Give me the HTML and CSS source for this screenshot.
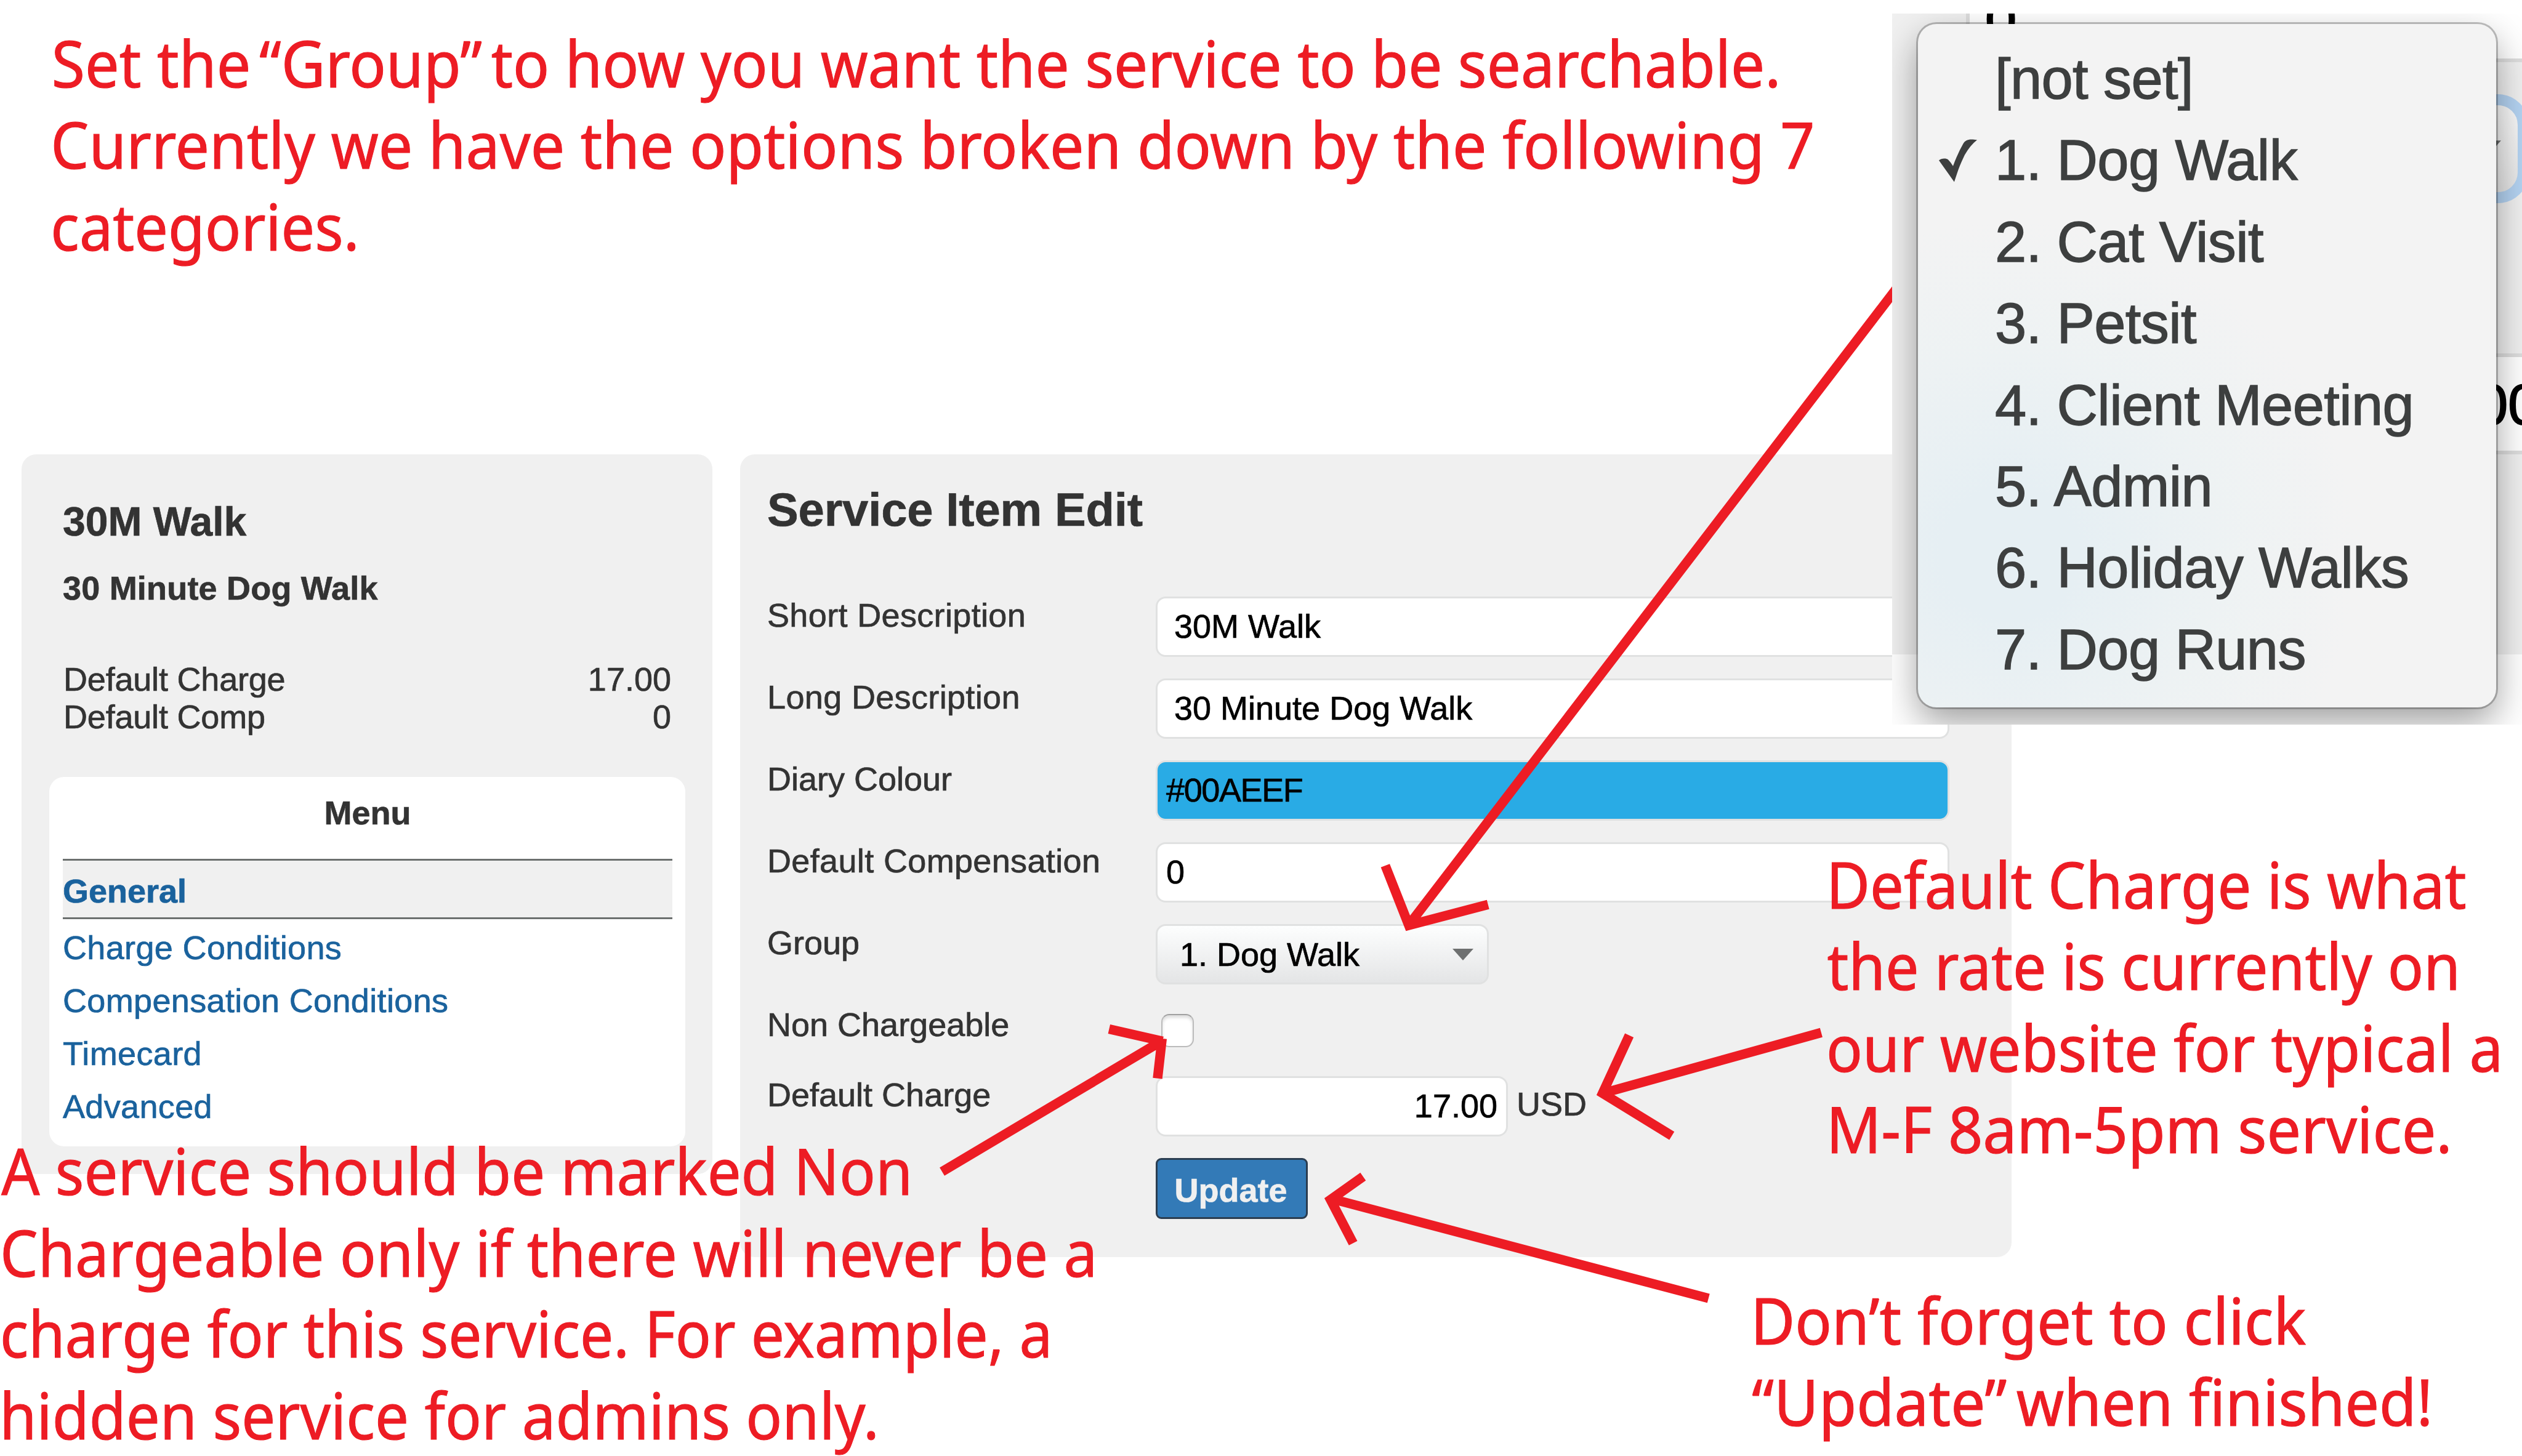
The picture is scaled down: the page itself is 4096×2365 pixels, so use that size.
FILE: index.html
```html
<!DOCTYPE html>
<html lang="en">
<head>
<meta charset="utf-8">
<title>Service Item Edit</title>
<link rel="stylesheet" href="styles.css">
</head>
<body>
<main class="page">
  <aside class="panel sidebar">
    <h1 class="item-name">30M Walk</h1>
    <h2 class="item-desc">30 Minute Dog Walk</h2>
    <dl class="facts">
      <div class="fact"><dt>Default Charge</dt><dd>17.00</dd></div>
      <div class="fact"><dt>Default Comp</dt><dd>0</dd></div>
    </dl>
    <nav class="menu">
      <h3 class="menu-title">Menu</h3>
      <a class="menu-link current">General</a>
      <a class="menu-link">Charge Conditions</a>
      <a class="menu-link">Compensation Conditions</a>
      <a class="menu-link">Timecard</a>
      <a class="menu-link">Advanced</a>
    </nav>
  </aside>

  <section class="panel editor">
    <h1 class="editor-title">Service Item Edit</h1>
    <div class="row"><span class="label loose">Short Description</span><div class="field wide inset">30M Walk</div></div>
    <div class="row"><span class="label loose">Long Description</span><div class="field wide inset">30 Minute Dog Walk</div></div>
    <div class="row"><span class="label">Diary Colour</span><div class="field wide colour">#00AEEF</div></div>
    <div class="row"><span class="label loose">Default Compensation</span><div class="field wide">0</div></div>
    <div class="row"><span class="label">Group</span>
      <div class="field select"><span>1. Dog Walk</span><svg class="caret" viewBox="0 0 34 19"><path d="M0 0H34L17 19Z"/></svg></div>
    </div>
    <div class="row short"><span class="label">Non Chargeable</span><div class="checkbox"></div></div>
    <div class="row"><span class="label">Default Charge</span><div class="field amount">17.00</div><span class="unit">USD</span></div>
    <div class="row"><span class="label"></span><div class="button">Update</div></div>
  </section>
</main>

<svg class="notes" viewBox="0 0 5571 3216">
  <g class="arrows">
    <path d="M4240 571L3113 2042M3060 1912L3112 2044L3287 1998"/>
    <path d="M2081 2588L2562 2302M2450 2273L2568 2300M2567 2294L2557 2382"/>
    <path d="M4023 2281L3540 2415M3599 2287L3540 2415L3693 2509"/>
    <path d="M3774 2868L2941 2648M3011 2599L2939 2650L2989 2746"/>
  </g>
  <g class="words">
    <text x="114" y="193" textLength="440" lengthAdjust="spacingAndGlyphs">Set the</text>
    <text x="573" y="193" textLength="492" lengthAdjust="spacingAndGlyphs">“Group”</text>
    <text x="1085" y="193" textLength="2849" lengthAdjust="spacingAndGlyphs">to how you want the service to be searchable.</text>
    <text x="112" y="373" textLength="3897" lengthAdjust="spacingAndGlyphs">Currently we have the options broken down by the following 7</text>
    <text x="112" y="553" textLength="682" lengthAdjust="spacingAndGlyphs">categories.</text>

    <text x="3" y="2640" textLength="2013" lengthAdjust="spacingAndGlyphs">A service should be marked Non</text>
    <text x="0" y="2820" textLength="2424" lengthAdjust="spacingAndGlyphs">Chargeable only if there will never be a</text>
    <text x="0" y="2999" textLength="2325" lengthAdjust="spacingAndGlyphs">charge for this service. For example, a</text>
    <text x="-1" y="3179" textLength="1943" lengthAdjust="spacingAndGlyphs">hidden service for admins only.</text>

    <text x="4034" y="2007" textLength="1414" lengthAdjust="spacingAndGlyphs">Default Charge is what</text>
    <text x="4036" y="2187" textLength="1399" lengthAdjust="spacingAndGlyphs">the rate is currently on</text>
    <text x="4034" y="2367" textLength="1495" lengthAdjust="spacingAndGlyphs">our website for typical a</text>
    <text x="4034" y="2547" textLength="1383" lengthAdjust="spacingAndGlyphs">M-F 8am-5pm service.</text>

    <text x="3867" y="2970" textLength="1227" lengthAdjust="spacingAndGlyphs">Don’t forget to click</text>
    <text x="3870" y="3150" textLength="563" lengthAdjust="spacingAndGlyphs">“Update”</text>
    <text x="4454" y="3150" textLength="920" lengthAdjust="spacingAndGlyphs">when finished!</text>
  </g>
</svg>

<div class="snapshot">
  <div class="backdrop">
    <div class="back-field back-top">0</div>
    <div class="back-select"></div>
    <svg class="back-caret" viewBox="0 0 34 19"><path d="M0 0H34L17 19Z"/></svg>
    <div class="back-field back-amount">00</div>
  </div>
  <ul class="popup">
    <li>[not set]</li>
    <li class="chosen"><svg class="tick" viewBox="335 855 260 295"><path d="M338 1005C352 990 385 987 400 1000Q418 1018 432 1042Q462 960 500 893C515 868 535 860 592 868Q545 905 510 968Q475 1040 460 1088L440 1148Z"/></svg>1. Dog Walk</li>
    <li>2. Cat Visit</li>
    <li>3. Petsit</li>
    <li>4. Client Meeting</li>
    <li>5. Admin</li>
    <li>6. Holiday Walks</li>
    <li>7. Dog Runs</li>
  </ul>
</div>
</body>
</html>
```
FILE: styles.css
```css
* { box-sizing: border-box; }

body {
  position: relative;
  width: 4096px;
  height: 2365px;
  margin: 0;
  overflow: hidden;
  background: #fff;
  color: #333;
  font: 54px/60px "Liberation Sans", Arial, sans-serif;
  -webkit-text-stroke: .7px;
}

h1, h2, h3, dl, dd, ul { margin: 0; padding: 0; }

.page {
  display: flex;
  align-items: flex-start;
  gap: 45px;
  padding: 738px 0 0 35px;
}

.panel {
  background: #f0f0f0;
  border-radius: 24px;
}

.sidebar {
  width: 1122px;
  height: 1169px;
  padding: 72px 44px 0 45px;
}

.item-name { padding-left: 22px; font-size: 66px; line-height: 74px; }
.item-desc { margin-top: 41px; padding-left: 22px; font-size: 54px; letter-spacing: .2px; }
.facts { margin-top: 88px; padding: 0 23px; line-height: 61px; }
.fact { display: flex; justify-content: space-between; }
.fact dt { letter-spacing: -.2px; }

.menu {
  display: flex;
  flex-direction: column;
  height: 600px;
  margin-top: 67px;
  padding: 28px 21px 0 22px;
  border-radius: 24px;
  background: #fff;
}

.menu-title { margin-bottom: 45px; font-size: 54px; text-align: center; }
.menu-link { color: #1a629d; letter-spacing: .35px; line-height: 86px; }
.menu-link.current {
  margin-bottom: 3px;
  padding: 19px 0 13px;
  border: solid #6c706f;
  border-width: 3px 0;
  background: #f0f0f0;
  font-weight: bold;
  letter-spacing: 0;
  line-height: 60px;
}

.editor {
  width: 2065px;
  height: 1304px;
  padding: 47px 0 0 44px;
}

.editor-title { height: 184px; font-size: 76px; letter-spacing: -.15px; line-height: 85px; }

.row { display: flex; align-items: flex-start; height: 133px; }
.row.short { height: 114px; }
.label { width: 631px; }
.label.loose { letter-spacing: .35px; }

.field {
  height: 98px;
  padding: 0 14px;
  border: 3px solid #e0e1e1;
  border-radius: 16px;
  background: #fff;
  color: #000;
  line-height: 91px;
}
.field.wide { width: 1289px; }
.field.inset { padding-left: 27px; }
.field.colour { background: #29abe5; letter-spacing: -1.4px; }
.field.amount { width: 572px; text-align: right; }

.field.select {
  display: flex;
  align-items: center;
  justify-content: space-between;
  width: 541px;
  padding: 0 22px 0 36px;
  background: linear-gradient(#fdfefe, #e4e5e6);
}
.caret { width: 34px; height: 19px; fill: #6e7070; }

.checkbox {
  width: 53px;
  height: 54px;
  margin: 13px 0 0 9px;
  border: 2px solid #bbb;
  border-top-color: #a0a0a0;
  border-radius: 13px;
  background: #fff;
  box-shadow: inset 0 4px 5px #ddd;
}

.unit { margin: 15px 0 0 14px; }

.button {
  width: 247px;
  height: 99px;
  padding-right: 3px;
  border: 3px solid #2b3d50;
  border-radius: 9px;
  background: #337ab7;
  color: #f0f0f0;
  font-weight: bold;
  line-height: 98px;
  text-align: center;
}

.notes {
  position: absolute;
  inset: 0;
  width: 4096px;
  height: 2365px;
}
.arrows { fill: none; stroke: #ed1c24; stroke-width: 21; stroke-miterlimit: 10; }
.words {
  fill: #ed1c24;
  stroke: #ed1c24;
  stroke-width: 1.5;
  font: 141px "Noto Sans", "Open Sans", sans-serif;
  -webkit-text-stroke: 0;
}

.snapshot {
  position: absolute;
  top: 22px;
  left: 3073px;
  width: 1023px;
  height: 1155px;
  overflow: hidden;
  background: #fff;
}

.backdrop {
  position: relative;
  height: 1041px;
  overflow: hidden;
  background: #f0f0f0;
}

.back-field {
  position: absolute;
  border: 6px solid #ddd;
  background: #fff;
  color: #000;
  font-size: 92px;
  -webkit-text-stroke: 2px;
}
.back-top {
  top: -80px;
  left: 120px;
  width: 1000px;
  height: 159px;
  padding-left: 25px;
  line-height: 166px;
}
.back-amount {
  top: 552px;
  left: 600px;
  width: 600px;
  height: 164px;
  padding-left: 343px;
  line-height: 154px;
}
.back-select {
  position: absolute;
  top: 131px;
  left: 300px;
  width: 734px;
  height: 177px;
  border: 18px solid #b4d3f2;
  border-radius: 50px;
  background: linear-gradient(#fafafa, #e6e6e6);
}
.back-caret { position: absolute; top: 206px; left: 929px; width: 60px; height: 34px; fill: #6e7070; }

.popup {
  position: absolute;
  top: 17px;
  left: 42px;
  width: 939px;
  height: 1110px;
  padding: 23px 0 0 125px;
  border-radius: 30px;
  background: radial-gradient(ellipse 560px 540px at 150px 860px, #e6eff3 20%, rgba(235, 242, 243, .6) 65%, rgba(242, 242, 242, 0)), #f3f3f3;
  box-shadow: 0 0 0 3px rgba(0, 0, 0, .24), 0 24px 60px rgba(0, 0, 0, .38);
  color: #3d3f3f;
  font-size: 92px;
  letter-spacing: -.6px;
  line-height: 132.4px;
  list-style: none;
  -webkit-text-stroke: 1.4px;
}
.chosen { position: relative; }
.tick { position: absolute; top: 30px; left: -92px; width: 64px; height: 72px; fill: #3d3f3f; }
```
